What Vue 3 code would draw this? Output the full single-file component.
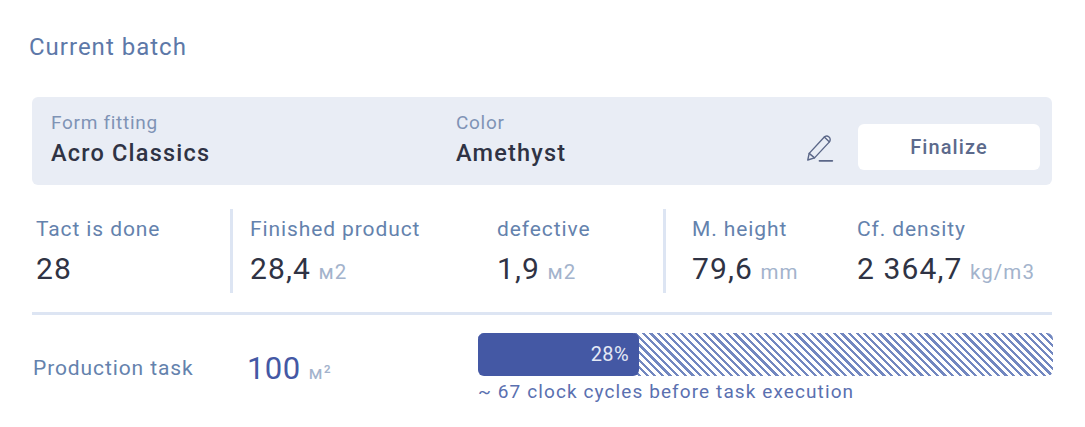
<script setup>
const groups = [
  [{ label: 'Tact is done', value: '28', unit: '', width: 194 }],
  [
    { label: 'Finished product', value: '28,4', unit: 'м2', width: 247 },
    { label: 'defective', value: '1,9', unit: 'м2', width: 166 }
  ],
  [
    { label: 'M. height', value: '79,6', unit: 'mm', width: 165 },
    { label: 'Cf. density', value: '2 364,7', unit: 'kg/m3', width: 195 }
  ]
]
const progress = 28
</script>

<template>
  <div class="batch">
    <h2 class="title">Current batch</h2>

    <div class="panel">
      <div class="field field-form">
        <span class="field-label">Form fitting</span>
        <span class="field-value">Acro Classics</span>
      </div>
      <div class="field field-color">
        <span class="field-label">Color</span>
        <span class="field-value">Amethyst</span>
      </div>
      <svg class="edit" viewBox="0 0 28 28" width="30" height="30" fill="none" stroke="currentColor" stroke-width="1.3" stroke-linecap="round" stroke-linejoin="round">
        <path d="M2.6 25.2l1.3-6.2L17.6 4.2c1.4-1.5 3.4-1.6 4.8-.4 1.4 1.2 1.5 3.2.2 4.7L8.9 23.2z" />
        <path d="M3.9 19l5 4.2" />
        <path d="M18 3.8l4.6 4.4" />
        <path d="M13.5 26h12" stroke-width="1.6" />
      </svg>
      <button class="finalize">Finalize</button>
    </div>

    <div class="stats">
      <div v-for="(group, i) in groups" :key="i" class="group">
        <div v-for="item in group" :key="item.label" class="stat" :style="{ width: item.width + 'px' }">
          <span class="stat-label">{{ item.label }}</span>
          <span class="stat-value">{{ item.value }} <small v-if="item.unit">{{ item.unit }}</small></span>
        </div>
      </div>
    </div>

    <div class="task">
      <span class="task-label">Production task</span>
      <span class="task-value">100 <small>м²</small></span>
      <div class="task-progress">
        <div class="bar">
          <div class="bar-fill" :style="{ width: progress + '%' }">{{ progress }}%</div>
        </div>
        <span class="bar-note">~ 67 clock cycles before task execution</span>
      </div>
    </div>
  </div>
</template>

<style scoped>
.batch {
  width: 1085px;
  height: 427px;
  box-sizing: border-box;
  padding: 33px 33px 0 32px;
  font-family: Roboto, "Liberation Sans", sans-serif;
  background: #fff;
  overflow: hidden;
}

.title {
  margin: 0 0 36px -3px;
  font-size: 24px;
  line-height: 28px;
  font-weight: 400;
  letter-spacing: 1px;
  color: #5d78a8;
}

.panel {
  height: 88px;
  display: flex;
  align-items: center;
  padding: 0 12px 0 19px;
  background: #e9edf5;
  border-radius: 6px;
}

.field {
  display: flex;
  flex-direction: column;
  margin-top: -5px;
}

.field-form {
  width: 405px;
}

.field-color {
  width: 346px;
}

.field-label {
  font-size: 19px;
  line-height: 24px;
  letter-spacing: 0.7px;
  color: #7f93b5;
}

.field-value {
  margin-top: 4px;
  font-size: 23.5px;
  line-height: 28px;
  font-weight: 500;
  letter-spacing: 1.2px;
  color: #2f3344;
}

.edit {
  margin: 14px 23px 0 3px;
  color: #5b6788;
  flex-shrink: 0;
}

.finalize {
  width: 182px;
  height: 46px;
  margin-top: 12px;
  border: none;
  border-radius: 6px;
  background: #fff;
  font-family: inherit;
  font-size: 20px;
  font-weight: 500;
  letter-spacing: 1.1px;
  color: #5c6a8c;
}

.stats {
  display: flex;
  margin: 24px 0 0 4px;
}

.group {
  display: flex;
  height: 84px;
}

.group + .group {
  border-left: 3px solid #dde5f3;
  box-sizing: border-box;
}

.group:nth-child(2) {
  padding-left: 17px;
}

.group:nth-child(3) {
  padding-left: 26px;
}

.stat {
  display: flex;
  flex-direction: column;
  padding-top: 7px;
}

.stat-label {
  font-size: 21px;
  line-height: 26px;
  letter-spacing: 0.9px;
  color: #6482ad;
}

.stat-value {
  margin-top: 9px;
  font-size: 30px;
  line-height: 36px;
  letter-spacing: 1.1px;
  color: #2f3344;
  white-space: nowrap;
}

.stat-value small {
  margin-left: -1px;
  font-size: 20.5px;
  color: #a3b3cc;
}

.task {
  display: flex;
  align-items: flex-start;
  margin-top: 19px;
  padding-top: 18px;
  border-top: 3px solid #dde5f3;
}

.task-label {
  width: 214px;
  margin: 22px 0 0 1px;
  flex-shrink: 0;
  font-size: 21px;
  line-height: 26px;
  letter-spacing: 0.9px;
  color: #6482ad;
}

.task-value {
  width: 231px;
  margin-top: 17px;
  flex-shrink: 0;
  font-size: 31px;
  line-height: 38px;
  letter-spacing: 0.4px;
  color: #4458a4;
  white-space: nowrap;
}

.task-value small {
  font-size: 19px;
  letter-spacing: 1px;
  color: #a3b3cc;
}

.task-progress {
  width: 575px;
  flex-shrink: 0;
}

.bar {
  height: 43px;
  border-radius: 6px;
  background: repeating-linear-gradient(45deg, #7287c0 0, #7287c0 2.3px, #fff 2.3px, #fff 5.4px);
}

.bar-fill {
  height: 100%;
  box-sizing: border-box;
  padding-right: 10px;
  border-radius: 6px;
  background: #4458a4;
  color: #e4e9f5;
  font-size: 20px;
  line-height: 43px;
  letter-spacing: 0.4px;
  text-align: right;
}

.bar-note {
  display: block;
  margin-top: 3px;
  font-size: 19px;
  line-height: 26px;
  letter-spacing: 1.1px;
  color: #5a70b0;
  white-space: nowrap;
}
</style>

<style>
body {
  background: #fff;
}
</style>
